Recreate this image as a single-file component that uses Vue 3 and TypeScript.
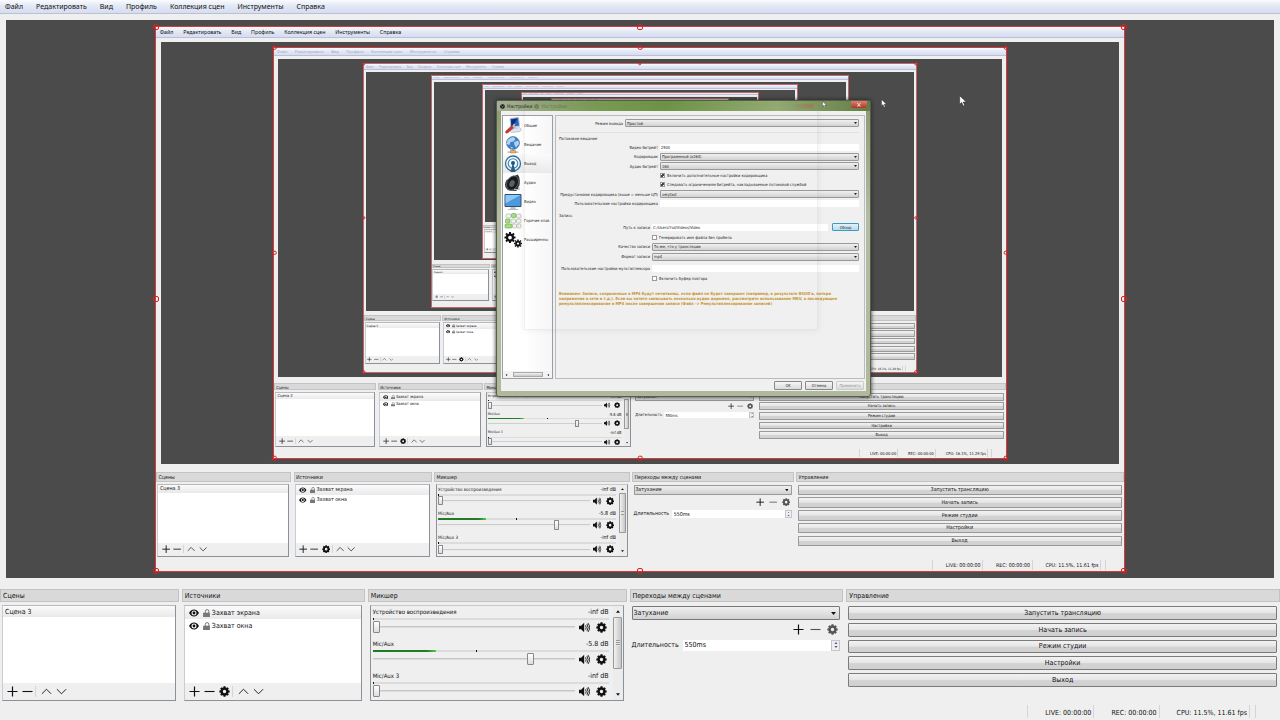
<script setup lang="ts">
import { computed, ref } from 'vue'

defineOptions({ name: 'App' })

const props = withDefaults(defineProps<{ depth?: number }>(), { depth: 0 })

const MAX_DEPTH = 7

interface Channel {
  name: string
  level: string
  volume: number
  meter: number
  peak: number
}

const menus = ['Файл', 'Редактировать', 'Вид', 'Профиль', 'Коллекция сцен', 'Инструменты', 'Справка']
const sources = ['Захват экрана', 'Захват окна']
const channels: Channel[] = [
  { name: 'Устройство воспроизведения', level: '-inf dB', volume: 0, meter: 0, peak: 0 },
  { name: 'Mic/Aux', level: '-5.8 dB', volume: 79, meter: 27, peak: 44 },
  { name: 'Mic/Aux 3', level: '-inf dB', volume: 0, meter: 0, peak: 0 },
]
const actions = ['Запустить трансляцию', 'Начать запись', 'Режим студии', 'Настройки', 'Выход']
const handles = ['nw', 'n', 'ne', 'w', 'e', 'sw', 's', 'se']
const sections = [
  { icon: 'general', label: 'Общие' },
  { icon: 'stream', label: 'Вещание' },
  { icon: 'output', label: 'Выход' },
  { icon: 'audio', label: 'Аудио' },
  { icon: 'video', label: 'Видео' },
  { icon: 'hotkeys', label: 'Горячие клав' },
  { icon: 'advanced', label: 'Расширенны' },
]

const isRoot = computed(() => props.depth === 0)
const stats = computed(() => (props.depth < 2 ? 'CPU: 11.5%, 11.61 fps' : 'CPU: 16.1%, 11.29 fps'))
const uid = (name: string) => `${name}-${props.depth}`

const duration = ref('550ms')
const bitrate = ref('2500')
const path = ref('C:/Users/Ysd/Videos/Video')
const advanced = ref(true)
const enforce = ref(true)
const noSpace = ref(false)
const replay = ref(false)
</script>

<template>
  <div class="obs" :class="{ root: isRoot, nested: !isRoot, faded: depth > 1 }">
    <svg v-if="isRoot" class="defs" aria-hidden="true">
      <symbol id="i-plus" viewBox="0 0 12 12"><path d="M6 .5v11M.5 6h11" stroke="currentColor" stroke-width="1.3" fill="none" /></symbol>
      <symbol id="i-minus" viewBox="0 0 12 12"><path d="M.5 6h11" stroke="currentColor" stroke-width="1.2" fill="none" /></symbol>
      <symbol id="i-up" viewBox="0 0 12 12"><path d="M1 8.500 6 3.500l5 5" stroke="currentColor" fill="none" /></symbol>
      <symbol id="i-down" viewBox="0 0 12 12"><path d="M1 3.500 6 8.500l5-5" stroke="currentColor" fill="none" /></symbol>
      <symbol id="i-gear" viewBox="0 0 16 16">
        <circle cx="8" cy="8" r="4.300" fill="none" stroke="currentColor" stroke-width="3.600" />
        <path d="M8 .5v3M8 12.500v3M.5 8h3M12.500 8h3M2.700 2.700l2 2M11.300 11.300l2 2M2.700 13.300l2-2M11.300 4.700l2-2" stroke="currentColor" stroke-width="3" />
      </symbol>
      <symbol id="i-eye" viewBox="0 0 16 12">
        <path fill-rule="evenodd" d="M0 6C2.500 2 5 .5 8 .5S13.500 2 16 6c-2.500 4-5 5.500-8 5.500S2.500 10 0 6zm8-4a4 4 0 1 0 0 8 4 4 0 0 0 0-8z" fill="currentColor" />
        <circle cx="8" cy="6" r="2.300" fill="currentColor" />
      </symbol>
      <symbol id="i-lock" viewBox="0 0 12 14">
        <path d="M4 7V4a3 3 0 0 1 6 0v3" fill="none" stroke="currentColor" stroke-width="1.700" />
        <path d="M0 6.500h12V14H0z" fill="currentColor" />
      </symbol>
      <symbol id="i-speaker" viewBox="0 0 16 14">
        <path d="M0 4.500h3L7.500 0v14L3 9.500H0z" fill="currentColor" />
        <path d="M9.500 4q2 3 0 6M11.500 2q3.600 5 0 10M13 .5q5 6.500 0 13" stroke="currentColor" stroke-width="1.300" fill="none" />
      </symbol>
      <symbol id="i-tri" viewBox="0 0 8 5"><path d="M0 0h8L4 5z" fill="currentColor" /></symbol>
      <symbol id="i-tri-up" viewBox="0 0 8 5"><path d="M0 5h8L4 0z" fill="currentColor" /></symbol>
      <symbol id="i-cursor" viewBox="0 0 12 18">
        <path d="M1 1v13l3-2.800 2.200 5.300 2.300-1-2.200-5H11z" fill="#fff" stroke="#222" stroke-width=".8" />
      </symbol>
      <symbol id="i-general" viewBox="0 0 36 36">
        <path d="M12 3 29 1l2 17-17 3z" fill="#2866bd" stroke="#b8c3d4" stroke-width="2" />
        <path d="M14 5l13-2-9 15-3 1z" fill="#0c2f7c" />
        <path d="M16 24l15-3 4 4-3 4-17 2-4-4z" fill="#dfe4ee" stroke="#93a0b4" />
        <path d="M19 18l-3-1-12 11c-2 3 0 5 3 4l13-11z" fill="#d4352c" stroke="#8f2420" />
        <path d="M17 19c0-4 3-6 6-5l-2 4 3 1 2-2c0 4-3 6-6 5z" fill="#bac2cd" />
      </symbol>
      <symbol id="i-stream" viewBox="0 0 36 36">
        <circle cx="18" cy="14" r="13" fill="#3d7fc8" stroke="#28588f" />
        <path d="M7 9q5-7 12-7l4 4-4 5-6 1-2 6-6-2zM20 12l9-3 1 7-6 7-3-5zM12 21l6 2-2 3z" fill="#c4e2f7" opacity=".85" />
        <path d="M18 27v4M7 32h22" stroke="#aaa" stroke-width="2.500" />
        <path d="M13 29h10v5H13z" fill="#efb04d" stroke="#a47632" />
      </symbol>
      <symbol id="i-output" viewBox="0 0 36 36">
        <circle cx="18" cy="17" r="15" fill="#f4fbff" stroke="#326f9d" stroke-width="2.600" />
        <circle cx="18" cy="17" r="9.500" fill="none" stroke="#4289b4" stroke-width="2.400" />
        <circle cx="18" cy="16" r="4" fill="#24557c" />
        <path d="M17 18h2l4 16H13z" fill="#2c5c82" />
      </symbol>
      <symbol id="i-audio" viewBox="0 0 36 36">
        <path d="M27 1c7 5 6 29-3 33L10 33C1 29 0 20 5 12z" fill="#30363b" />
        <ellipse cx="17" cy="18" rx="11" ry="15" transform="rotate(28 17 18)" fill="#171b1e" stroke="#646b70" stroke-width="1.500" />
        <ellipse cx="16" cy="19" rx="5" ry="7" transform="rotate(28 16 19)" fill="#596168" />
        <path d="M20 31h11l-2-6" stroke="#bbb" stroke-width="2" fill="none" />
      </symbol>
      <symbol id="i-video" viewBox="0 0 36 36">
        <path d="M14 26h8l2 6H12z" fill="#bcc3ca" /><path d="M8 33h20" stroke="#bbb" stroke-width="2" />
        <path d="M2 3h32v24H2z" fill="#4b9ae0" stroke="#34516e" stroke-width="2" />
        <path d="M3 4h30L3 21z" fill="#8fc8f5" />
      </symbol>
      <symbol id="i-hotkeys" viewBox="0 0 36 36">
        <g fill="#f1f3ef" stroke="#a8b0a4" stroke-width="1.300">
          <rect x="4" y="4" width="10" height="8" rx="2" /><rect x="25" y="4" width="9" height="8" rx="2" />
          <rect x="14" y="14" width="9" height="8" rx="2" /><rect x="25" y="14" width="9" height="8" rx="2" />
          <rect x="17" y="24" width="8" height="8" rx="2" /><rect x="26" y="24" width="8" height="8" rx="2" />
        </g>
        <g fill="#a6dc83" stroke="#6baa4a" stroke-width="1.300">
          <rect x="15" y="3" width="9" height="8" rx="2" /><rect x="3" y="14" width="9" height="8" rx="2" /><rect x="2" y="24" width="14" height="8" rx="2" />
        </g>
      </symbol>
      <symbol id="i-advanced" viewBox="0 0 36 36">
        <g fill="none" stroke="#111">
          <circle cx="12" cy="13" r="6" stroke-width="4.500" />
          <path d="M12 2v4M12 20v4M1 13h4M19 13h4M4 5l3 3M17 18l3 3M4 21l3-3M17 8l3-3" stroke-width="4" />
          <circle cx="28" cy="25" r="4" stroke-width="3.500" />
          <path d="M28 17v3M28 30v3M20 25h3M33 25h3M22 19l2 2M32 29l2 2M22 31l2-2M32 21l2-2" stroke-width="3" />
        </g>
      </symbol>
      <symbol id="i-obs" viewBox="0 0 16 16">
        <circle cx="8" cy="8" r="7.500" fill="#111" />
        <path d="M8 8C3 8 4 3 6 3M8 8c3-4 6 0 5 2M8 8c2 4-2 6-4 5" stroke="#ccc" stroke-width="1.300" fill="none" />
      </symbol>
    </svg>

    <nav class="menubar">
      <button v-for="m in menus" :key="m" type="button" class="menu">{{ m }}</button>
    </nav>

    <main class="canvas">
      <div v-if="depth < MAX_DEPTH" class="capture" :class="{ far: depth > 1 }">
        <App :depth="depth + 1" />
        <template v-if="depth < 3">
          <span v-for="h in handles" :key="h" class="handle" :class="h"></span>
        </template>
      </div>

      <section v-if="isRoot" class="dialog" role="dialog" aria-labelledby="dialog-title">
        <header class="titlebar">
          <svg class="logo"><use href="#i-obs" /></svg>
          <span id="dialog-title">Настройки</span>
          <svg class="logo dim"><use href="#i-obs" /></svg>
          <span class="dim">Настройки</span>
          <span class="echo-close"></span>
          <button type="button" class="close" aria-label="Закрыть">×</button>
        </header>
        <div class="dialog-main">
          <aside class="sections">
            <ul>
              <li v-for="s in sections" :key="s.icon" :class="{ on: s.icon === 'output' }">
                <svg><use :href="`#i-${s.icon}`" /></svg>
                <span>{{ s.label }}</span>
              </li>
            </ul>
            <div class="hscroll">
              <svg class="left"><use href="#i-tri" /></svg>
              <i></i>
              <svg class="right"><use href="#i-tri" /></svg>
            </div>
          </aside>
          <form class="settings" @submit.prevent>
            <div class="form mode">
              <label for="mode">Режим вывода</label>
              <span class="pick"><select id="mode"><option>Простой</option></select><svg><use href="#i-tri" /></svg></span>
            </div>
            <h3>Потоковое вещание</h3>
            <div class="form streaming">
              <label for="bitrate">Видео битрейт</label>
              <input id="bitrate" v-model="bitrate" type="text" />
              <label for="encoder">Кодировщик</label>
              <span class="pick"><select id="encoder"><option>Программный (x264)</option></select><svg><use href="#i-tri" /></svg></span>
              <label for="abitrate">Аудио битрейт</label>
              <span class="pick"><select id="abitrate"><option>160</option></select><svg><use href="#i-tri" /></svg></span>
              <label class="check"><input v-model="advanced" type="checkbox" />Включить дополнительные настройки кодировщика</label>
              <label class="check"><input v-model="enforce" type="checkbox" />Следовать ограничениям битрейта, накладываемые потоковой службой</label>
              <label for="preset">Предустановки кодировщика (выше = меньше ЦП)</label>
              <span class="pick"><select id="preset"><option>veryfast</option></select><svg><use href="#i-tri" /></svg></span>
              <label for="custom">Пользовательские настройки кодировщика</label>
              <input id="custom" type="text" />
            </div>
            <h3>Запись</h3>
            <div class="form recording">
              <label for="path">Путь к записи</label>
              <span class="browse"><input id="path" v-model="path" type="text" /><button type="button">Обзор</button></span>
              <label class="check"><input v-model="noSpace" type="checkbox" />Генерировать имя файла без пробела</label>
              <label for="quality">Качество записи</label>
              <span class="pick"><select id="quality"><option>То же, что у трансляции</option></select><svg><use href="#i-tri" /></svg></span>
              <label for="format">Формат записи</label>
              <span class="pick"><select id="format"><option>mp4</option></select><svg><use href="#i-tri" /></svg></span>
              <label for="muxer">Пользовательские настройки мультиплексора</label>
              <input id="muxer" type="text" />
              <label class="check"><input v-model="replay" type="checkbox" />Включить буфер повтора</label>
            </div>
            <p class="warning">
              Внимание: Записи, сохраненные в MP4 будут нечитаемы, если файл не будет завершен (например, в результате BSOD'а, потери<br />
              напряжения в сети и т.д.). Если вы хотите записывать несколько аудио дорожек, рассмотрите использование MKV, а последующее<br />
              ремультиплексирование в MP4 после завершения записи (Файл -&gt; Ремультиплексирование записей)
            </p>
          </form>
        </div>
        <footer>
          <button type="button">OK</button>
          <button type="button">Отмена</button>
          <button type="button" disabled>Применить</button>
        </footer>
        <span class="echo"></span>
      </section>

      <template v-if="isRoot">
        <svg class="cursor c1"><use href="#i-cursor" /></svg>
        <svg class="cursor c2"><use href="#i-cursor" /></svg>
        <svg class="cursor c3"><use href="#i-cursor" /></svg>
      </template>
    </main>

    <div class="docks">
      <section class="dock">
        <h2>Сцены</h2>
        <div class="body list">
          <ul><li class="scene on">Сцена 3</li></ul>
          <div class="tools">
            <button type="button" aria-label="Добавить"><svg><use href="#i-plus" /></svg></button>
            <button type="button" aria-label="Удалить"><svg><use href="#i-minus" /></svg></button>
            <i></i>
            <button type="button" aria-label="Вверх"><svg><use href="#i-up" /></svg></button>
            <button type="button" aria-label="Вниз"><svg><use href="#i-down" /></svg></button>
          </div>
        </div>
      </section>

      <section class="dock">
        <h2>Источники</h2>
        <div class="body list">
          <ul>
            <li v-for="(s, i) in sources" :key="s" class="source" :class="{ on: i === 0 }">
              <svg class="eye"><use href="#i-eye" /></svg>
              <svg class="lock"><use href="#i-lock" /></svg>
              {{ s }}
            </li>
          </ul>
          <div class="tools">
            <button type="button" aria-label="Добавить"><svg><use href="#i-plus" /></svg></button>
            <button type="button" aria-label="Удалить"><svg><use href="#i-minus" /></svg></button>
            <button type="button" aria-label="Свойства"><svg><use href="#i-gear" /></svg></button>
            <i></i>
            <button type="button" aria-label="Вверх"><svg><use href="#i-up" /></svg></button>
            <button type="button" aria-label="Вниз"><svg><use href="#i-down" /></svg></button>
          </div>
        </div>
      </section>

      <section class="dock">
        <h2>Микшер</h2>
        <div class="body mixer">
          <div class="channels">
            <div v-for="(c, i) in channels" :key="c.name" class="channel">
              <div class="caption"><label :for="uid(`vol${i}`)">{{ c.name }}</label><span>{{ c.level }}</span></div>
              <div class="meter">
                <b :style="{ width: c.meter + '%' }"></b>
                <em :style="{ left: c.peak + '%' }"></em>
              </div>
              <div class="fader">
                <input :id="uid(`vol${i}`)" type="range" min="0" max="100" :value="c.volume" />
                <button type="button" aria-label="Звук"><svg><use href="#i-speaker" /></svg></button>
                <button type="button" aria-label="Настройки"><svg><use href="#i-gear" /></svg></button>
              </div>
            </div>
          </div>
          <div class="vscroll">
            <svg><use href="#i-tri-up" /></svg>
            <i></i>
            <svg><use href="#i-tri" /></svg>
          </div>
        </div>
      </section>

      <section class="dock">
        <h2>Переходы между сценами</h2>
        <div class="body transitions">
          <span class="pick"><select aria-label="Переход"><option>Затухание</option></select><svg><use href="#i-tri" /></svg></span>
          <div class="tools">
            <button type="button" aria-label="Добавить"><svg><use href="#i-plus" /></svg></button>
            <button type="button" aria-label="Удалить" class="soft"><svg><use href="#i-minus" /></svg></button>
            <button type="button" aria-label="Свойства" class="soft"><svg><use href="#i-gear" /></svg></button>
          </div>
          <div class="duration">
            <label :for="uid('duration')">Длительность</label>
            <input :id="uid('duration')" v-model="duration" type="text" />
            <span class="spin"><svg><use href="#i-tri-up" /></svg><svg><use href="#i-tri" /></svg></span>
          </div>
        </div>
      </section>

      <section class="dock">
        <h2>Управление</h2>
        <div class="body actions">
          <button v-for="a in actions" :key="a" type="button">{{ a }}</button>
        </div>
      </section>
    </div>

    <footer class="status">
      <span>LIVE: 00:00:00</span>
      <span>REC: 00:00:00</span>
      <span>{{ stats }}</span>
      <span class="grip"></span>
    </footer>
  </div>
</template>

<style>
body {
  margin: 0;
  background: #efefef;
}
</style>

<style scoped>
* {
  box-sizing: border-box;
}
.obs {
  display: flex;
  flex-direction: column;
  min-width: 0;
  min-height: 0;
  background: #efefef;
  color: #111;
  font: 7px/10px "DejaVu Sans Condensed", "DejaVu Sans", sans-serif;
  overflow: hidden;
}
.root {
  height: 100vh;
}
.nested {
  zoom: 0.757;
}
.defs {
  position: absolute;
  width: 0;
  height: 0;
}
button,
input,
select {
  margin: 0;
  padding: 0;
  border: 0;
  border-radius: 0;
  background: none;
  color: inherit;
  font: inherit;
  min-width: 0;
}
ul,
h2,
h3,
p {
  margin: 0;
  padding: 0;
  font: inherit;
  list-style: none;
}
svg {
  display: block;
  flex: none;
}

.menubar {
  display: flex;
  flex: none;
  gap: 13px;
  height: 14px;
  padding: 0 5px;
  background: linear-gradient(#fafbfe, #e3e8f5 45%, #d7ddf0);
  border-bottom: 1px solid #b9c0da;
}
.menu {
  font: 7px/14px "Noto Sans", "Open Sans", sans-serif;
  white-space: nowrap;
}
.faded .menu {
  color: #a4a8b8;
}

.canvas {
  position: relative;
  display: flex;
  justify-content: center;
  flex: 1;
  min-height: 0;
  margin: 6px 6px 11px;
  padding: 6px 0;
  background: #4b4b4b;
}
.capture {
  position: relative;
  display: grid;
  grid-template: minmax(0, 1fr) / minmax(0, 1fr);
  width: 76.5%;
  border: 1px solid #e0363a;
}
.capture.far {
  border-color: #c4656a;
}
.handle {
  position: absolute;
  width: 6px;
  height: 6px;
  border: 1px solid #d8201f;
  border-radius: 2px;
  translate: -50% -50%;
}
.nw, .n, .ne { top: 0; }
.w, .e { top: 50%; }
.sw, .s, .se { top: 100%; }
.nw, .w, .sw { left: 0; }
.n, .s { left: 50%; }
.ne, .e, .se { left: 100%; }

.docks {
  display: grid;
  flex: none;
  grid-template-columns: minmax(0, 179fr) minmax(0, 183fr) minmax(0, 259fr) minmax(0, 214fr) minmax(0, 434fr);
  gap: 3px;
}
.dock {
  display: flex;
  flex-direction: column;
  gap: 3px;
}
.dock h2 {
  height: 13px;
  padding: 1px 2px;
  background: #d9d9d9;
  border: 1px solid #c3c3c3;
  white-space: nowrap;
}
.body {
  height: 96px;
  margin: 0 3px 0 2px;
}
.list {
  display: flex;
  flex-direction: column;
  background: #fff;
  border: 1px solid #8a919b;
  border-top-color: #b5b9bf;
  border-left-color: #c9ccd0;
}
.list ul {
  flex: 1;
}
.list li {
  display: flex;
  align-items: center;
  white-space: nowrap;
}
.on {
  background: linear-gradient(#fbfbfb, #e9e9e9);
}
.scene {
  height: 11px;
  padding: 0 2px;
}
.source {
  gap: 4px;
  height: 13px;
  padding: 0 4px;
}
.eye {
  width: 10px;
  height: 8px;
}
.lock {
  width: 7px;
  height: 8px;
  margin-right: -2px;
  color: #777;
}
.tools {
  display: flex;
  align-items: center;
  gap: 4px;
  height: 17px;
  padding: 0 4px;
  background: #efefef;
}
.tools svg {
  width: 11px;
  height: 11px;
}
.tools i {
  width: 1px;
  height: 11px;
  margin: 0 1px 0 -2px;
  background: #d5d5d5;
}

.mixer {
  display: flex;
  border: 1px solid #8a919b;
  border-top-color: #c5c8cc;
}
.channels {
  display: flex;
  flex: 1;
  flex-direction: column;
  min-width: 0;
  overflow: hidden;
}
.channel {
  flex: none;
  height: 32px;
  padding: 1px 4px 0 2px;
}
.caption {
  display: flex;
  justify-content: space-between;
  height: 11px;
  white-space: nowrap;
}
.caption label {
  font-size: 6px;
}
.meter {
  position: relative;
  height: 2px;
  background: #dcdcdc;
}
.meter b {
  display: block;
  height: 2px;
  background: linear-gradient(90deg, #1f7a22, #267a2a 85%, #49d04c);
}
.meter em {
  position: absolute;
  top: 0;
  width: 1px;
  height: 2px;
  background: #111;
}
.fader {
  display: flex;
  align-items: center;
  gap: 6px;
  height: 14px;
  padding-right: 2px;
}
.fader input {
  flex: 1;
  height: 14px;
  margin-right: -2px;
  appearance: none;
  background: linear-gradient(#bcbcbc, #e6e6e6) center / 100% 2px no-repeat;
}
.fader input::-webkit-slider-thumb {
  appearance: none;
  width: 7px;
  height: 12px;
  background: linear-gradient(#fff, #ddd);
  border: 1px solid #888;
  border-radius: 1px;
}
.fader svg {
  width: 11px;
  height: 11px;
}
.vscroll {
  display: flex;
  flex-direction: column;
  align-items: center;
  width: 10px;
  padding: 4px 0;
  background: #ececec;
}
.vscroll i {
  width: 9px;
  height: 52px;
  margin: 4px 0 auto;
  background: repeating-linear-gradient(#999 0 1px, #e4e4e4 1px 2px) center / 4px 6px no-repeat, linear-gradient(90deg, #f1f1f1, #c6c6c6);
  border: 1px solid #999;
  border-radius: 1px;
}
.vscroll svg {
  width: 4px;
  height: 3px;
}

.pick {
  position: relative;
  display: block;
}
.pick select {
  display: block;
  width: 100%;
  height: 14px;
  padding: 0 1px;
  appearance: none;
  background: linear-gradient(#f0f0f0, #d2d2d2);
  border: 1px solid #777;
  border-radius: 1px;
}
.pick svg {
  position: absolute;
  top: 6px;
  right: 4px;
  width: 5px;
  height: 3px;
}
.transitions {
  padding-top: 1px;
}
.transitions .tools {
  justify-content: flex-end;
  gap: 6px;
  height: 18px;
  padding: 0 2px;
}
.soft {
  color: #555;
}
.duration {
  display: flex;
  align-items: center;
  height: 12px;
  margin-top: 1px;
}
.duration label {
  flex: none;
  width: 51px;
}
.duration input {
  flex: 1;
  height: 11px;
  padding: 0 2px;
  background: #fff;
}
.spin {
  display: grid;
  align-content: center;
  justify-content: center;
  gap: 2px;
  width: 9px;
  height: 11px;
  border: 1px solid #c5c5d0;
  color: #55608c;
}
.spin svg {
  width: 4px;
  height: 2px;
}
.actions {
  display: flex;
  flex-direction: column;
  gap: 3px;
  padding: 1px 0 14px;
}
.actions button {
  flex: 1;
  background: linear-gradient(#f2f2f2, #e6e6e6 48%, #d3d3d3 55%, #d0d0d0);
  border: 1px solid #7b7b7b;
  border-radius: 1px;
  line-height: 10px;
}
.nested .actions button,
.nested .pick select {
  border-color: #999;
}

.status {
  display: flex;
  flex: none;
  justify-content: flex-end;
  height: 19px;
  padding: 4px 24px 2px 0;
  white-space: nowrap;
}
.status span {
  padding: 3px 2px 0 17px;
  border-right: 1px solid #d5d5d5;
}
.status span:first-child {
  border-left: 1px solid #d5d5d5;
}
.status .grip {
  padding: 0 5px 0 0;
}

.dialog {
  position: absolute;
  top: 80px;
  left: 50%;
  display: flex;
  flex-direction: column;
  width: 375px;
  height: 297px;
  margin-left: -144px;
  padding: 0 4px 5px;
  background: linear-gradient(#8a9a70, #b3bca2 40%, #b0b89c);
  border: 1px solid #565d4a;
  border-radius: 3px;
  box-shadow: 0 0 4px #222;
  color: #222;
  font: 4px/5px "DejaVu Sans Condensed", "DejaVu Sans", sans-serif;
}
.titlebar {
  display: flex;
  align-items: center;
  gap: 2px;
  height: 10px;
  margin: 0 -4px;
  padding: 0 3px;
  background: linear-gradient(90deg, #a7ae98, #7a9c55 24%, #6c9445 45%, #93ab72 75%, #617d45);
  font-size: 5px;
}
.logo {
  width: 5px;
  height: 5px;
}
.dim {
  opacity: 0.35;
}
.echo-close {
  width: 20px;
  height: 4px;
  margin-left: auto;
  background: linear-gradient(90deg, #8a9a70, #b56848);
  opacity: 0.6;
}
.close {
  width: 16px;
  height: 7px;
  margin: 0 0 3px 36px;
  background: linear-gradient(#d88374, #b53325);
  border-radius: 0 0 2px 2px;
  color: #fff;
  font-size: 7px;
  line-height: 6px;
}
.dialog-main {
  display: flex;
  flex: 1;
  gap: 2px;
  min-height: 0;
  padding: 4px 1px 0;
  background: #f0f0f0;
}
.sections {
  display: flex;
  flex-direction: column;
  width: 51px;
  overflow: hidden;
  background: linear-gradient(90deg, #fff 45%, #f6f6f6);
  border: 1px solid #9a9fa6;
}
.sections ul {
  flex: 1;
}
.sections li {
  display: flex;
  align-items: center;
  gap: 2px;
  height: 19px;
  padding: 0 1px;
  white-space: nowrap;
}
.sections li svg {
  width: 18px;
  height: 18px;
}
.hscroll {
  display: flex;
  align-items: center;
  justify-content: space-between;
  height: 7px;
  padding: 0 2px;
  background: #f3f3f3;
}
.hscroll i {
  width: 30px;
  height: 5px;
  background: linear-gradient(#f2f2f2, #c8c8c8);
  border: 1px solid #aaa;
}
.hscroll svg {
  width: 3px;
  height: 2px;
}
.left {
  rotate: 90deg;
}
.right {
  rotate: -90deg;
}
.settings {
  flex: 1;
  min-width: 0;
  padding: 2px 5px 0 3px;
  border: 1px solid #b8bbc0;
}
.form {
  display: grid;
  align-items: center;
  column-gap: 2px;
}
.form > label {
  text-align: right;
  white-space: nowrap;
}
.form > .check {
  display: flex;
  grid-column: 2;
  align-items: center;
  gap: 2px;
}
.mode {
  grid-template-columns: 64px 1fr;
  height: 10px;
}
.streaming {
  grid-template: 10px 9px 10px 9px 9px 10px 9px / 99px 1fr;
}
.recording {
  grid-template: 10px 10px 9px 11px 12px 8px / 91px 1fr;
}
.settings h3 {
  height: 8px;
}
.mode + h3 {
  margin-top: 4px;
  border-top: 1px solid #e2e2e2;
  padding-top: 3px;
  height: 10px;
}
.streaming + h3 {
  margin: 5px 0 1px;
}
.settings input[type="text"] {
  height: 7px;
  padding: 0 1px;
  background: #fff;
}
.settings .pick select {
  height: 8px;
  padding: 0 1px;
  border-color: #999;
}
.settings .pick svg {
  top: 3px;
  right: 2px;
  width: 3px;
  height: 2px;
}
.settings input[type="checkbox"] {
  width: 5px;
  height: 5px;
  appearance: none;
  background: #fff;
  border: 1px solid #999;
}
.settings input[type="checkbox"]:checked {
  background: linear-gradient(135deg, #fff 30%, #445 30% 70%, #fff 70%);
}
.browse {
  display: flex;
  align-items: center;
  gap: 4px;
}
.browse input {
  flex: 1;
}
.browse button {
  width: 27px;
  height: 8px;
  background: linear-gradient(#e4f3fa, #b9dcec);
  border: 1px solid #3c9cc0;
  border-radius: 1px;
}
.warning {
  margin-top: 9px;
  color: #c7932d;
  font-weight: bold;
  white-space: nowrap;
}
.dialog footer {
  display: flex;
  justify-content: flex-end;
  gap: 3px;
  height: 12px;
  padding: 2px 2px 1px;
  background: #f0f0f0;
}
.dialog footer button {
  width: 28px;
  background: linear-gradient(#f6f6f6, #dadada);
  border: 1px solid #888;
  border-radius: 1px;
}
.dialog footer button:disabled {
  border-color: #ccc;
  color: #999;
}
.echo {
  position: absolute;
  top: 5px;
  left: 27px;
  width: 294px;
  height: 224px;
  border: 1px solid #9992;
  border-top-color: transparent;
  box-shadow: 0 0 6px #8882;
  pointer-events: none;
}
.cursor {
  position: absolute;
  left: 50%;
}
.c1 {
  top: 75px;
  width: 8px;
  height: 12px;
  margin-left: 319px;
}
.c2 {
  top: 79px;
  width: 6px;
  height: 9px;
  margin-left: 241px;
}
.c3 {
  top: 81px;
  width: 5px;
  height: 7px;
  margin-left: 182px;
}
</style>
